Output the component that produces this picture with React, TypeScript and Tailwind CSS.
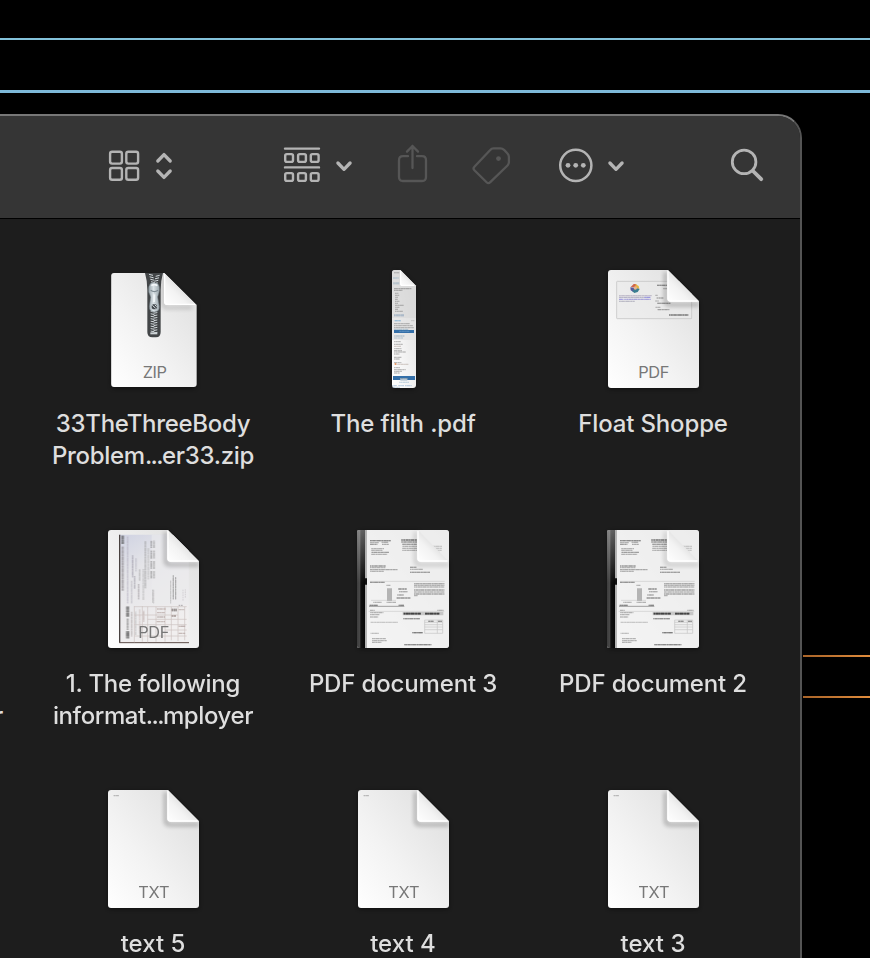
import type { ReactNode } from "react";

/* [x, y, length, thickness, colour] for each run of miniature print */
type Print = [number, number, number, number?, string?];

function FinePrint({ rows, strength = 0.68 }: { rows: Print[]; strength?: number }) {
  return (
    <g opacity={strength}>
      {rows.map(([x, y, w, t = 3, c = "#888"], i) => (
        <g key={i} stroke={c} strokeWidth={t} fill="none">
          <path d={`M${x} ${y}h${w}`} opacity="0.55" />
          <path d={`M${x} ${y}h${w}`} strokeDasharray="5 2.2 8 1.2 3 1.7 11 2.6" strokeDashoffset={i * 7} opacity="0.75" />
        </g>
      ))}
    </g>
  );
}

function Defs() {
  return (
    <svg className="h-0 w-0" aria-hidden="true">
      <defs>
        <linearGradient id="paper" x1="0" y1="1" x2="1" y2="0">
          <stop offset="0" stopColor="#ffffff" />
          <stop offset="0.4" stopColor="#f3f3f3" />
          <stop offset="0.75" stopColor="#e6e6e6" />
          <stop offset="1" stopColor="#dedede" />
        </linearGradient>
        <linearGradient id="fold" x1="0" y1="1" x2="0.6" y2="0.4">
          <stop offset="0" stopColor="#ffffff" />
          <stop offset="0.6" stopColor="#f3f3f3" />
          <stop offset="1" stopColor="#dedede" />
        </linearGradient>
        <linearGradient id="metal" x1="0" y1="0" x2="1" y2="0">
          <stop offset="0" stopColor="#98a4aa" />
          <stop offset="0.45" stopColor="#dbe3e7" />
          <stop offset="1" stopColor="#9aa6ac" />
        </linearGradient>
        <linearGradient id="spine" x1="0" y1="0" x2="1" y2="0">
          <stop offset="0" stopColor="#3c3c3c" />
          <stop offset="0.35" stopColor="#4a4a4a" />
          <stop offset="0.45" stopColor="#111111" />
          <stop offset="1" stopColor="#050505" />
        </linearGradient>
        <linearGradient id="spineShade" x1="0" y1="0" x2="0" y2="1">
          <stop offset="0" stopColor="#ffffff" stopOpacity="0.35" />
          <stop offset="0.45" stopColor="#ffffff" stopOpacity="0" />
        </linearGradient>
        <linearGradient id="scan" x1="0" y1="0" x2="0.4" y2="1">
          <stop offset="0" stopColor="#cfd2e2" />
          <stop offset="0.35" stopColor="#e4e4e8" />
          <stop offset="1" stopColor="#f1efef" />
        </linearGradient>
        <filter id="soft" x="-50%" y="-50%" width="200%" height="200%">
          <feGaussianBlur stdDeviation="6" />
        </filter>
        <clipPath id="sheet">
          <path d="M48 30H219L312 123V375Q312 384 303 384H48Q39 384 39 375V39Q39 30 48 30Z" />
        </clipPath>
        <clipPath id="book">
          <path d="M42 30H303Q312 30 312 39V375Q312 384 303 384H42Q36 384 36 378V36Q36 30 42 30Z" />
        </clipPath>
      </defs>
    </svg>
  );
}

function Icon({ children }: { children: ReactNode }) {
  return (
    <svg className="block h-[118px] w-[90px] overflow-visible" viewBox="39 30 270 354">
      {children}
    </svg>
  );
}

function Kind({ label }: { label: string }) {
  return (
    <text
      x={label === "ZIP" ? 179.5 : 176.5}
      y="354"
      textAnchor="middle"
      textLength={label === "ZIP" ? 72 : 94}
      fontSize="49"
      fontFamily="Inter, sans-serif"
      fill="#777777"
    >
      {label}
    </text>
  );
}

function Sheet({ children, kind, doc }: { children?: ReactNode; kind?: string; doc?: boolean }) {
  return (
    <Icon>
      <path d="M48 33H219L312 126V378Q312 388 303 388H48Q39 388 39 378V39Z" fill="#000" opacity="0.45" filter="url(#soft)" />
      <g clipPath={doc ? "url(#book)" : "url(#sheet)"}>
        <rect x="36" y="30" width="276" height="354" fill="url(#paper)" />
        {children}
        <path d="M212 36V122Q212 134 224 134H312" fill="none" stroke="#000" strokeWidth="10" opacity={doc ? 0.16 : 0.27} filter="url(#soft)" />
        <path d="M217 30V116Q217 125 226 125H312L219 30Z" fill="url(#fold)" />
        <path d="M219 32V115Q219 123 227 123H308" fill="none" stroke="#fff" strokeWidth="4" />
      </g>
      {kind && <Kind label={kind} />}
    </Icon>
  );
}

function ZipIcon() {
  const teeth = Array.from({ length: 24 }, (_, i) => 43 + i * 7.4);
  return (
    <Icon>
      <path d="M58 45H208L305 139V374Q305 386 295 386H58Q49 386 49 374Z" fill="#000" opacity="0.4" filter="url(#soft)" />
      <path d="M57 39H208L305 136V372Q305 381 296 381H57Q48.5 381 48.5 372V48Q48.5 39 57 39Z" fill="url(#paper)" />
      <path d="M150 39H204Q197 62 197 90V216Q197 232 183 232H172Q157 232 157 216V90Q157 62 150 39Z" fill="#424547" />
      {teeth.map((y, i) => (
        <path
          key={i}
          d={i < 5 ? `M${162 + i * 2} ${y}l12 3M${194 - i * 2} ${y + 3}l-12 3` : `M167 ${y}l11 2M187 ${y + 3.7}l-11 2`}
          stroke="#d3dadd"
          strokeWidth="3"
        />
      ))}
      <path d="M168 69H187Q197 80 192 98L188 111L193 139Q194 156 178 156Q162 156 163 139L167 111L161 96Q159 77 168 69Z" fill="url(#metal)" stroke="#687279" strokeWidth="1.5" />
      <path d="M169 77Q178 71 187 77" stroke="#f4f8fa" strokeWidth="5" fill="none" />
      <path d="M167 91Q178 99 189 91" stroke="#7e8b92" strokeWidth="4" fill="none" />
      <path d="M178 103L177 126" stroke="#eff4f6" strokeWidth="6" />
      <circle cx="178" cy="140" r="8" fill="#43494d" />
      <path d="M172 136L182 145M179 134L185 140" stroke="#d3dce1" strokeWidth="3" />
      <path d="M166 217H187V223H166Z" fill="#cdd3d6" />
      <path d="M204 50V132Q204 144 216 143L292 142" fill="none" stroke="#000" strokeWidth="7" opacity="0.25" filter="url(#soft)" />
      <path d="M207 39V125Q207 135 217 135H305L208 39Z" fill="url(#fold)" />
      <path d="M209 43V124Q209 133 218 133H300" fill="none" stroke="#fff" strokeWidth="4" />
      <Kind label="ZIP" />
    </Icon>
  );
}

function FilthIcon() {
  const rows: Print[] = [
    [147, 38, 16, 4, "#999"], [144, 54, 17, 4, "#a2b9ca"], [144, 70, 19, 6, "#9db1c0"],
    [147, 86, 52, 3, "#777"], [147, 91, 25, 3, "#777"],
    [150, 100, 10], [150, 106, 13], [150, 112, 9], [150, 118, 8], [150, 124, 14], [150, 130, 9],
    [150, 136, 27], [150, 142, 13], [150, 148, 9], [150, 154, 24],
    [147, 166, 30, 6, "#8ba3bb"], [149, 182, 18, 4, "#6da6cf"], [198, 182, 10, 3, "#aaa"],
    [147, 191, 48], [147, 197, 57], [147, 203, 59], [147, 208, 43, 3, "#80a3bc"],
    [147, 228, 31, 5, "#9cb2c1"], [147, 234, 27, 3, "#9cb2c1"],
    [147, 245, 20], [147, 253, 26], [147, 259, 21, 3, "#b5a8a2"], [147, 266, 22], [147, 272, 24],
    [147, 276, 35], [147, 282, 16], [147, 292, 22], [147, 297, 17], [147, 308, 22], [155, 313, 35, 3, "#b7aaa1"],
    [147, 323, 18], [147, 329, 35], [147, 334, 24], [147, 339, 17],
    [162, 367, 30, 3, "#9bb9cf"], [142, 377, 14, 3, "#8eaecf"], [160, 377, 17, 3, "#8eaecf"], [180, 377, 20, 3, "#8eaecf"], [143, 382, 21, 3, "#9db3ca"],
  ];
  return (
    <Icon>
      <path d="M147 34H166L213 80V380Q208 388 204 388H150Q141 388 141 380Z" fill="#000" opacity="0.4" filter="url(#soft)" />
      <path d="M149 30H166L213 77V375Q213 384 204 384H150Q141 384 141 375V38Q141 30 149 30Z" fill="url(#paper)" />
      <path d="M149 30H166L213 77V175H141V38Q141 30 149 30Z" fill="#d4d4d4" opacity="0.65" />
      <path d="M141 175H213V240H141Z" fill="#e0e0e0" opacity="0.6" />
      <FinePrint rows={rows} />
      <path d="M147 210H207V219H147Z" fill="#346fa8" />
      <path d="M144 348H210V360H144Z" fill="#346fa8" />
      <path d="M166 354H187V363H166Z" fill="#ccd7df" />
      <FinePrint rows={[[163, 214, 30, 3, "#6f9dc9"], [167, 356, 20, 4, "#577792"]]} />
      <path d="M149 309H154V315H149Z" fill="#e69a66" />
      <path d="M165 30V71Q165 78 172 78H213L166 30Z" fill="url(#fold)" />
      <path d="M167 34V71Q167 76 173 76H207" stroke="#fff" strokeWidth="4" fill="none" />
    </Icon>
  );
}

function ShopIcon() {
  return (
    <Sheet kind="PDF">
      <rect x="65" y="64" width="225" height="112" rx="2" fill="#e9e9e9" fillOpacity="0.6" stroke="#c6c6c6" strokeWidth="2.5" />
      <path d="M107 81L116 72L124 72L123 83Z" fill="#d0654b" />
      <path d="M121 72L131 78L133 87L122 84Z" fill="#e5b53f" />
      <path d="M106 82L120 84L114 95L107 91Z" fill="#575a9d" />
      <path d="M120 83L134 87L128 96L118 99L112 94Z" fill="#3b7e91" />
      <circle cx="121" cy="84" r="5" fill="#e8b48d" />
      <FinePrint
        rows={[
          [72, 107, 98, 3, "#a098b2"], [72, 112, 74, 3, "#8a86a5"], [147, 112, 20, 3, "#5a54d5"],
          [72, 118, 14, 3, "#6760d5"], [88, 118, 79, 3, "#716aca"], [72, 124, 47, 3, "#9391a5"],
          [186, 76, 30, 4, "#555"], [204, 86, 12, 3, "#888"], [181, 106, 7], [185, 114, 20, 3, "#666"],
          [181, 123, 10], [187, 130, 39, 4, "#666"], [181, 142, 15, 3, "#888"], [188, 149, 35, 3, "#666"],
          [222, 165, 58, 5, "#444"],
        ]}
      />
    </Sheet>
  );
}

function TaxIcon() {
  return (
    <Sheet kind="PDF">
      <path d="M73 44H281V369H73Z" fill="url(#scan)" />
      <path d="M170 44H281V255H170Z" fill="#ebebec" opacity="0.6" />
      <path d="M74 44V368" stroke="#48413f" strokeWidth="4" />
      <path d="M73 368H282" stroke="#5d4c48" strokeWidth="3" />
      <g transform="rotate(-90)">
        <FinePrint
          rows={[
            [-212, 83, 132, 5, "#827c82"], [-72, 83, 25, 7, "#444"], [-355, 98, 22, 10, "#333"], [-290, 98, 31, 9, "#444"],
            [-330, 98, 34, 5, "#777"],
            [-250, 98, 200, 3, "#a7a3b5"], [-250, 110, 68, 3, "#aaa6b0"], [-172, 113, 66, 3, "#817e8e"],
            [-206, 119, 38, 3, "#85818e"], [-154, 123, 40, 3, "#aaa8b5"], [-238, 131, 46, 3, "#8a8388"], [-182, 134, 35, 3, "#999"],
            [-205, 151, 142, 3, "#888"], [-240, 145, 93, 3, "#aaa"], [-178, 160, 94, 3, "#aaa"], [-248, 174, 39, 3, "#888"],
            [-175, 169, 22, 5, "#888"], [-147, 169, 24, 5, "#888"], [-116, 169, 24, 5, "#888"], [-84, 169, 22, 5, "#888"],
            [-175, 177, 22, 4, "#888"], [-147, 177, 24, 4, "#888"], [-116, 177, 24, 4, "#888"], [-84, 177, 22, 4, "#888"],
            [-250, 227, 68, 3, "#aaa"], [-238, 235, 72, 4, "#888"], [-238, 242, 67, 3, "#777"],
            [-350, 110, 75, 2, "#776b6b"], [-345, 122, 70, 3, "#aaa"], [-340, 134, 72, 2, "#b59c98"], [-305, 146, 33, 3, "#a68e8a"],
          ]}
        />
      </g>
      <path d="M118 258V367M142 258V365M158 260V367M183 260V365M210 260V365M229 260V361M249 260V363M269 260V361M118 260H275M118 285H249M158 298H275M118 314H275M210 330H275M118 348H275" stroke="#ccc1bf" strokeWidth="2" />
      <FinePrint
        rows={[
          [186, 267, 26, 3, "#a7928d"], [186, 278, 23, 3, "#a89490"], [186, 291, 24, 3, "#978581"], [185, 305, 25, 3, "#a99690"],
          [230, 270, 16, 8, "#605754"], [230, 288, 13, 5, "#84716d"], [251, 269, 17, 3, "#a89894"], [251, 319, 20, 4, "#a08c88"], [251, 340, 20, 3, "#a08c88"],
        ]}
      />
      <path d="M251 256H263" stroke="#aaa7aa" strokeWidth="3" strokeDasharray="5 2" />
      <path d="M176 251V212M264 242V207M271 233V208" stroke="#c9c6c9" strokeWidth="2" strokeDasharray="5 2" />
    </Sheet>
  );
}

function InvoiceIcon() {
  return (
    <Sheet doc>
      <path d="M62 30H312V384H62Z" fill="#f0f0f0" opacity="0.75" />
      <FinePrint
        strength={0.75}
        rows={[
          [75, 62, 62, 4, "#585858"], [75, 68, 27, 3], [110, 67, 20, 4], [75, 73, 22, 3, "#666"], [111, 73, 20, 3, "#777"],
          [79, 86, 38], [79, 91, 34], [79, 97, 53, 3, "#666"], [79, 103, 48, 3],
          [169, 60, 47, 4, "#444"], [169, 66, 47, 4, "#777"], [172, 73, 44, 4, "#777"], [172, 79, 44, 3], [172, 85, 44, 3], [172, 91, 44, 3],
          [252, 79, 39, 3, "#aaa"], [258, 85, 33, 3, "#aaa"], [264, 91, 27, 3, "#aaa"], [270, 97, 14, 3, "#aaa"],
          [75, 138, 48, 4, "#777"], [75, 143, 46, 3], [75, 149, 83, 3, "#777"], [75, 154, 42, 3],
          [195, 142, 20, 4, "#777"], [195, 148, 39, 3], [195, 157, 60, 4, "#777"],
          [75, 187, 44, 4, "#666"], [124, 196, 12, 3], [160, 207, 25, 4, "#666"], [162, 215, 26, 4], [157, 225, 20, 4], [155, 234, 41, 5, "#777"],
          [207, 191, 91, 4], [207, 196, 91, 3], [207, 201, 91, 3], [207, 210, 91, 4], [207, 216, 91, 3], [207, 222, 91, 4], [207, 227, 12, 3],
          [85, 247, 25, 3], [125, 247, 28, 3], [74, 256, 25, 4, "#555"], [161, 256, 16, 4, "#555"],
          [75, 271, 14, 3], [75, 278, 40, 3], [75, 284, 28, 3], [75, 291, 25, 3], [277, 271, 19, 3],
          [77, 307, 82, 3, "#aaa"], [77, 340, 25, 3, "#999"], [175, 296, 50, 4, "#666"],
          [81, 356, 42, 3], [81, 362, 44, 3], [81, 367, 28, 3], [177, 374, 82, 4, "#555"], [202, 338, 32, 4, "#444"],
        ]}
      />
      <path d="M126 205H141V243H126Z" fill="#b4b4b4" />
      <path d="M78 241H153M75 184H299M71 274H298" stroke="#bdbdbd" strokeWidth="1.5" />
      <path d="M72 259H178" stroke="#777" strokeWidth="2" />
      <path d="M173 276H295V286H173Z" fill="#c7c7c7" />
      <FinePrint rows={[[176, 281, 52, 5, "#222"], [240, 281, 43, 5, "#222"]]} strength={0.9} />
      <path d="M239 300H293V340H239ZM239 307H293M239 314H293M239 321H293M239 329H293M277 300V340" fill="none" stroke="#c4c4c4" strokeWidth="2" />
      <FinePrint rows={[[250, 304, 16, 4, "#555"], [279, 304, 12, 4, "#555"]]} />
      <rect x="36" y="30" width="25" height="354" fill="url(#spine)" />
      <rect x="36" y="30" width="25" height="354" fill="url(#spineShade)" />
      <path d="M61 30H66V384H61Z" fill="#b5b5b5" />
      <path d="M60 175H66V194H60Z" fill="#111" />
    </Sheet>
  );
}

function TextIcon() {
  return (
    <Sheet kind="TXT">
      <FinePrint rows={[[56, 47, 16, 3, "#888"]]} />
    </Sheet>
  );
}

function FileItem({ icon, tracking, children }: { icon: ReactNode; tracking: string; children: ReactNode }) {
  return (
    <div className="flex h-[260px] flex-col items-center pt-[50px]">
      {icon}
      <div className={`mt-5 text-center text-[24px] leading-8 font-medium whitespace-nowrap text-[#dedede] ${tracking}`}>
        {children}
      </div>
    </div>
  );
}

function Dots() {
  return <span className="tracking-[-1.6px]">...</span>;
}

function Tool({ x, w, className, children }: { x: number; w: number; className: string; children: ReactNode }) {
  return (
    <svg
      className={`block h-11 shrink-0 ${className}`}
      viewBox={`${x} 144 ${w} 44`}
      fill="none"
      stroke="currentColor"
      strokeLinecap="round"
      strokeLinejoin="round"
    >
      {children}
    </svg>
  );
}

function Toolbar() {
  return (
    <div className="flex h-[102px] shrink-0 bg-[#353535] pt-7 text-[#b4b4b4]">
      <Tool x={104} w={72} className="ml-[104px] w-[72px]">
        <g strokeWidth="2.4">
          <rect x="110.1" y="151.8" width="11.8" height="11.8" rx="2" />
          <rect x="126.3" y="151.8" width="11.8" height="11.8" rx="2" />
          <rect x="110.1" y="168" width="11.8" height="11.8" rx="2" />
          <rect x="126.3" y="168" width="11.8" height="11.8" rx="2" />
        </g>
        <path d="M157.8 161L164 154.6L170.2 161M157.8 171L164 177.4L170.2 171" strokeWidth="3.3" />
      </Tool>
      <Tool x={280} w={76} className="ml-[104px] w-[76px]">
        <path d="M285 148.6H319M285 167.4H319" strokeWidth="2.4" />
        <g strokeWidth="2.4">
          {[285.2, 298.1, 310.8].map((x) => (
            <g key={x}>
              <rect x={x} y="154.1" width="7.8" height="7.8" rx="1.6" />
              <rect x={x} y="173.1" width="7.8" height="7.8" rx="1.6" />
            </g>
          ))}
        </g>
        <path d="M337.9 163L344 169.3L350.1 163" strokeWidth="3.3" />
      </Tool>
      <Tool x={396} w={36} className="ml-10 w-9 text-[#565656]">
        <path d="M408 156.2H403Q399 156.2 399 160.2V177Q399 181 403 181H422Q426 181 426 177V160.2Q426 156.2 422 156.2H417M412.5 168V146M407 151.6L412.5 146L418 151.6" strokeWidth="2.3" />
      </Tool>
      <Tool x={470} w={44} className="ml-[38px] w-11 text-[#565656]">
        <path d="M493.5 148.4H500.5Q502.5 148.4 504 149.8L507.5 153.5Q508.9 155 508.9 157V162.2Q508.9 164.1 507.5 165.5L490.3 182.2Q488.4 184 486.6 182.2L474.4 170.2Q472.7 168.5 474.4 166.7L490 150.2Q491.6 148.4 493.5 148.4Z" strokeWidth="2.3" />
        <circle cx="498.5" cy="158.6" r="2.4" fill="currentColor" stroke="none" />
      </Tool>
      <Tool x={556} w={72} className="ml-[42px] w-[72px]">
        <circle cx="575.8" cy="165.3" r="15.6" strokeWidth="2.5" />
        <g fill="currentColor" stroke="none">
          <circle cx="568" cy="165.3" r="2.4" />
          <circle cx="575.7" cy="165.3" r="2.4" />
          <circle cx="583.3" cy="165.3" r="2.4" />
        </g>
        <path d="M609.9 163L616 169.3L622.1 163" strokeWidth="3.3" />
      </Tool>
      <Tool x={728} w={40} className="ml-[100px] w-10">
        <circle cx="744.1" cy="161.9" r="11.8" strokeWidth="2.8" />
        <path d="M753 171L761.2 179.2" strokeWidth="3.8" />
      </Tool>
    </div>
  );
}

export default function App() {
  return (
    <div className="flex h-[958px] w-[870px] flex-col overflow-hidden bg-black pt-[38px] font-[Inter,sans-serif]">
      <div className="h-[2px] shrink-0 bg-[#83c1da]" />
      <div className="mt-[50px] h-[3px] shrink-0 bg-[#7eb9d9]" />
      <div className="mt-[21px] flex h-[844px] shrink-0">
        <main className="flex w-[802px] shrink-0 flex-col overflow-hidden rounded-tr-[24px] border-t-2 border-r-2 border-t-[#777777] border-r-[#545454] bg-[#1d1d1d]">
          <Toolbar />
          <div className="h-px shrink-0 bg-black" />
          <div className="-mt-px flex pt-[2px]">
            <div className="flex w-7 shrink-0 flex-col justify-start pt-[480px] text-[24px] leading-8 font-medium text-[#dedede]">
              <span className="-ml-[6px]">r</span>
            </div>
            <div className="grid shrink-0 grid-cols-[repeat(3,250px)]">
              <FileItem icon={<ZipIcon />} tracking="tracking-[-0.3px]">
                33TheThreeBody
                <br />
                Problem
                <Dots />
                er33.zip
              </FileItem>
              <FileItem icon={<FilthIcon />} tracking="tracking-[-0.15px]">The filth .pdf</FileItem>
              <FileItem icon={<ShopIcon />} tracking="tracking-[-0.15px]">Float Shoppe</FileItem>
              <FileItem icon={<TaxIcon />} tracking="tracking-[-0.25px]">
                1. The following
                <br />
                <span className="tracking-[-0.4px]">
                  informat
                  <Dots />
                  mployer
                </span>
              </FileItem>
              <FileItem icon={<InvoiceIcon />} tracking="tracking-[-0.15px]">PDF document 3</FileItem>
              <FileItem icon={<InvoiceIcon />} tracking="tracking-[-0.15px]">PDF document 2</FileItem>
              <FileItem icon={<TextIcon />} tracking="tracking-normal">text 5</FileItem>
              <FileItem icon={<TextIcon />} tracking="tracking-normal">text 4</FileItem>
              <FileItem icon={<TextIcon />} tracking="tracking-normal">text 3</FileItem>
            </div>
          </div>
        </main>
        <div className="ml-px flex grow flex-col pt-[541px]">
          <div className="h-[2px] bg-linear-to-r from-[#a96429] to-[#e18d3d]" />
          <div className="mt-[39px] h-[2px] bg-linear-to-r from-[#a96429] to-[#e18d3d]" />
        </div>
      </div>
      <Defs />
    </div>
  );
}
